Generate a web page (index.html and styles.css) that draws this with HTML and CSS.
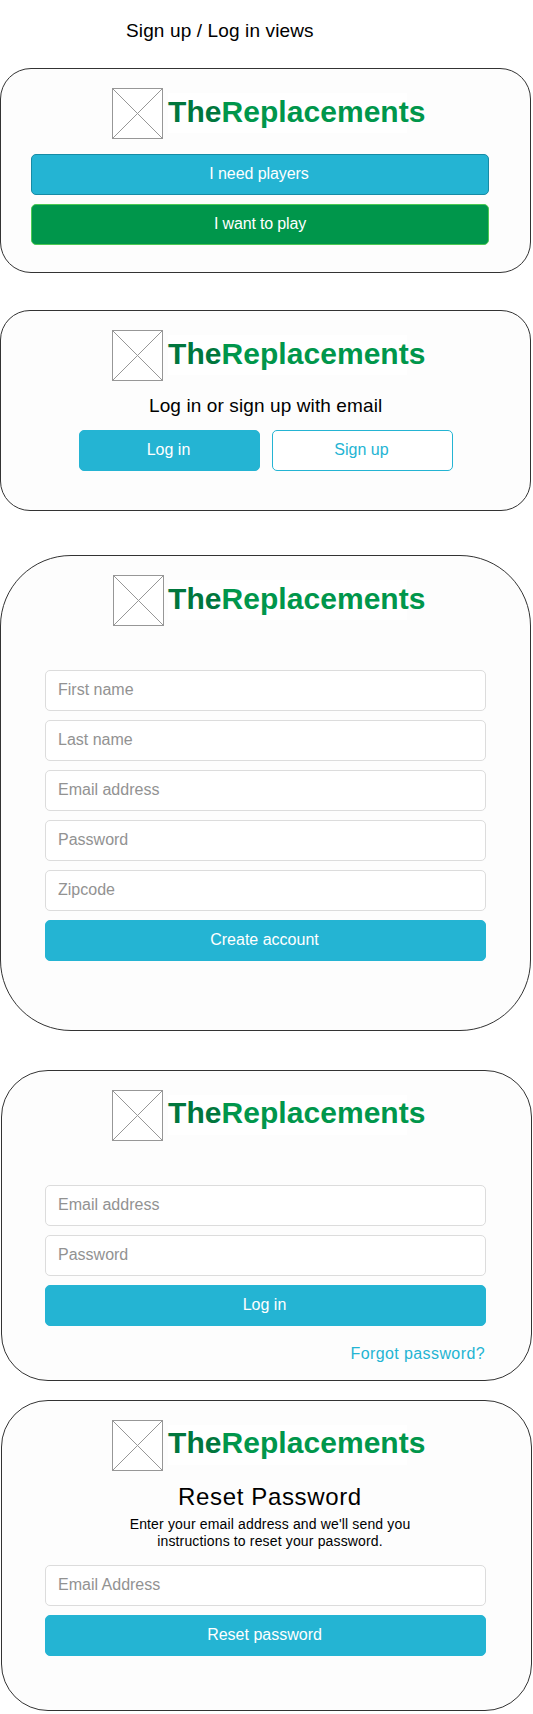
FILE: index.html
```html
<!DOCTYPE html>
<html lang="en">
<head>
<meta charset="utf-8">
<title>Sign up / Log in views</title>
<link rel="stylesheet" href="styles.css">
</head>
<body>
<svg class="defs" width="0" height="0" aria-hidden="true">
  <symbol id="placeholder" viewBox="0 0 51 51">
    <rect x="0.5" y="0.5" width="50" height="50" fill="#fff" stroke="#979797"/>
    <path d="M0.5 0.5L50.5 50.5M50.5 0.5L0.5 50.5" fill="none" stroke="#979797"/>
  </symbol>
</svg>
<main class="board">
  <h1 class="board-title">Sign up / Log in views</h1>

  <section class="card card-choose">
    <div class="brand"><svg class="mark"><use href="#placeholder"/></svg><div class="wordmark"><span class="the">The</span>Replacements</div></div>
    <div class="actions">
      <button class="btn btn-need">I need players</button>
      <button class="btn btn-play">I want to play</button>
    </div>
  </section>

  <section class="card card-email">
    <div class="brand"><svg class="mark"><use href="#placeholder"/></svg><div class="wordmark"><span class="the">The</span>Replacements</div></div>
    <h2 class="lead">Log in or sign up with email</h2>
    <div class="pair">
      <button class="btn">Log in</button>
      <button class="btn btn-outline">Sign up</button>
    </div>
  </section>

  <section class="card card-signup">
    <div class="brand"><svg class="mark"><use href="#placeholder"/></svg><div class="wordmark"><span class="the">The</span>Replacements</div></div>
    <form class="form">
      <input class="field" type="text" placeholder="First name">
      <input class="field" type="text" placeholder="Last name">
      <input class="field" type="text" placeholder="Email address">
      <input class="field" type="text" placeholder="Password">
      <input class="field" type="text" placeholder="Zipcode">
      <button class="btn" type="button">Create account</button>
    </form>
  </section>

  <section class="card card-login">
    <div class="brand"><svg class="mark"><use href="#placeholder"/></svg><div class="wordmark"><span class="the">The</span>Replacements</div></div>
    <form class="form">
      <input class="field" type="text" placeholder="Email address">
      <input class="field" type="text" placeholder="Password">
      <button class="btn" type="button">Log in</button>
    </form>
    <a class="forgot">Forgot password?</a>
  </section>

  <section class="card card-reset">
    <div class="brand"><svg class="mark"><use href="#placeholder"/></svg><div class="wordmark"><span class="the">The</span>Replacements</div></div>
    <h2 class="reset-title">Reset Password</h2>
    <p class="reset-text">Enter your email address and we'll send you<br>instructions to reset your password.</p>
    <form class="form">
      <input class="field" type="text" placeholder="Email Address">
      <button class="btn" type="button">Reset password</button>
    </form>
  </section>
</main>
</body>
</html>
```

FILE: styles.css
```css
* { box-sizing: border-box; }
body {
  margin: 0;
  background: #fff;
  color: #000;
  font-family: "Liberation Sans", Arial, sans-serif;
}
h1, h2, p { margin: 0; font-weight: 400; white-space: nowrap; }
.defs { display: block; }
.board { width: 533px; height: 1714px; overflow: hidden; }
.board-title {
  height: 68px;
  padding: 19px 0 0 126px;
  font-size: 19px;
  line-height: 24px;
  letter-spacing: 0.13px;
}

.card {
  display: flex;
  flex-direction: column;
  width: 531px;
  padding-top: 19px;
  background: #fdfdfd;
  border: 1px solid #333;
}
.card-choose { height: 205px; border-radius: 31px; }
.card-email { height: 201px; margin-top: 37px; border-radius: 30px; }
.card-signup { height: 476px; margin-top: 44px; border-radius: 71px; }
.card-login { height: 311px; margin: 39px 0 0 1px; border-radius: 47px; }
.card-reset { height: 311px; margin: 19px 0 0 1px; border-radius: 47px; }

.brand { display: flex; flex: none; height: 51px; margin-left: 111px; }
.card-login .brand, .card-reset .brand { margin-left: 110px; }
.mark { display: block; flex: none; width: 51px; height: 51px; }
.card-signup .mark { margin: 0 -1px 0 1px; }
.wordmark {
  width: 239px;
  height: 40px;
  margin: 5px 0 0 5px;
  background: #fff;
  color: #00964b;
  font-size: 30px;
  font-weight: 700;
  line-height: 38px;
  letter-spacing: 0.05px;
  white-space: nowrap;
}
.card-login .wordmark, .card-reset .wordmark { line-height: 36px; }
.the { color: #00763d; }

.btn {
  width: 100%;
  height: 41px;
  padding: 0 2px 2px 0;
  background: #24b4d3;
  border: 1px solid #24b4d3;
  border-radius: 5px;
  color: #fff;
  font: 16px/20px "Liberation Sans", Arial, sans-serif;
}
.btn-need { border-color: #178ba5; letter-spacing: -0.07px; }
.btn-play { padding-right: 0; background: #00964b; border-color: #4cc854; letter-spacing: -0.15px; }
.btn-outline { background: #fff; color: #24b4d3; }

.actions { display: grid; gap: 9px; width: 458px; margin: 15px 0 0 30px; }
.pair { display: grid; grid-template-columns: 181px 181px; gap: 12px; margin-left: 78px; }
.lead {
  height: 49px;
  padding-top: 13px;
  margin-left: 148px;
  font-size: 19px;
  line-height: 24px;
  letter-spacing: 0.11px;
}

.form { display: grid; gap: 9px; width: 441px; margin: 44px 0 0 44px; }
.card-login .form { margin-left: 43px; }
.card-reset .form { margin: 15px 0 0 43px; }
.field {
  width: 100%;
  height: 41px;
  padding: 0 12px 2px;
  background: #fff;
  border: 1px solid #dcdcdc;
  border-radius: 5px;
  font: 16px/20px "Liberation Sans", Arial, sans-serif;
}
.field::placeholder { color: #929292; opacity: 1; }

.forgot {
  align-self: flex-end;
  margin: 18px 46px 0 0;
  color: #24b4d3;
  font-size: 16px;
  line-height: 20px;
  letter-spacing: 0.4px;
}
.reset-title {
  height: 45px;
  padding-top: 11px;
  margin-left: 176px;
  font-size: 24px;
  line-height: 30px;
  letter-spacing: 0.65px;
}
.reset-text {
  width: 282px;
  height: 34px;
  margin: 0 0 0 127px;
  font-size: 14px;
  line-height: 17px;
  letter-spacing: 0.15px;
  text-align: center;
}
```
